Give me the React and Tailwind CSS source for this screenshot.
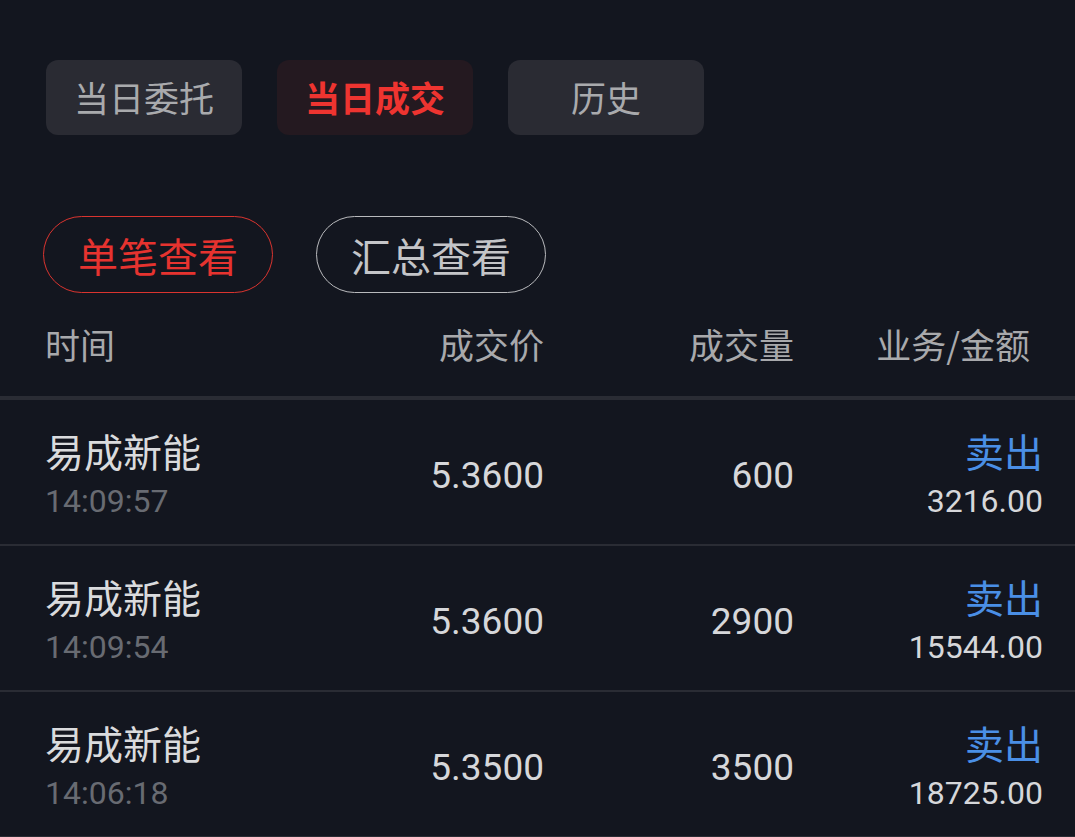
import React from 'react';

const cjk = { fontFamily: '"Noto Sans CJK SC", "Noto Sans", sans-serif' };
const num = { fontFamily: 'Roboto, "Noto Sans", sans-serif' };

const trades = [
  { name: '易成新能', time: '14:09:57', price: '5.3600', qty: '600', side: '卖出', amount: '3216.00' },
  { name: '易成新能', time: '14:09:54', price: '5.3600', qty: '2900', side: '卖出', amount: '15544.00' },
  { name: '易成新能', time: '14:06:18', price: '5.3500', qty: '3500', side: '卖出', amount: '18725.00' },
];

export default function App() {
  return (
    <div className="w-[1075px] h-[837px] overflow-hidden bg-[#13161f]" style={cjk}>
      {/* 顶部标签 */}
      <div className="flex gap-[35px] px-[46px] pt-[60px]">
        <div className="w-[196px] h-[75px] rounded-[12px] bg-[#2a2b33] flex items-center justify-center text-[35px] text-[#a9aaad]">当日委托</div>
        <div className="w-[196px] h-[75px] rounded-[12px] bg-[#241920] flex items-center justify-center text-[35px] font-bold text-[#ee3430]">当日成交</div>
        <div className="w-[196px] h-[75px] rounded-[12px] bg-[#2a2b33] flex items-center justify-center text-[35px] text-[#a9aaad]">历史</div>
      </div>

      {/* 查看方式 */}
      <div className="flex gap-[43px] px-[43px] mt-[81px]">
        <div className="w-[230px] h-[77px] rounded-full border border-[#d9342f] flex items-center justify-center text-[40px] text-[#e6332f]">单笔查看</div>
        <div className="w-[230px] h-[77px] rounded-full border border-[#b9babd] flex items-center justify-center text-[40px] text-[#c4c5c8]">汇总查看</div>
      </div>

      {/* 表头 */}
      <div className="flex items-center h-[103px] pl-[45px] pr-[32px] text-[35px] text-[#a8a9ac]">
        <div className="flex-1">时间</div>
        <div className="w-[220px] text-right">成交价</div>
        <div className="w-[250px] text-right">成交量</div>
        <div className="w-[249px] text-right pr-[13px]">业务/金额</div>
      </div>
      <div className="h-[4px] bg-[#2a2c34]" />

      {trades.map((t, i) => (
        <div key={i}>
          <div className="flex h-[144px] pl-[45px] pr-[32px]">
            <div className="flex-1 flex flex-col pt-[24px]">
              <span className="text-[39px] leading-[52px] text-[#dadbdd]">{t.name}</span>
              <span className="text-[32px] leading-[50px] text-[#686b72]" style={num}>{t.time}</span>
            </div>
            <div className="w-[220px] flex items-center justify-end pt-[8px] text-[37px] text-[#d6d7da]" style={num}>{t.price}</div>
            <div className="w-[250px] flex items-center justify-end pt-[8px] text-[37px] text-[#d6d7da]" style={num}>{t.qty}</div>
            <div className="w-[249px] flex flex-col items-end pt-[24px]">
              <span className="text-[39px] leading-[52px] text-[#4a8fe6]">{t.side}</span>
              <span className="text-[32px] leading-[50px] text-[#d6d7da]" style={num}>{t.amount}</span>
            </div>
          </div>
          <div className="h-[2px] bg-[#2a2c34]" />
        </div>
      ))}
    </div>
  );
}
